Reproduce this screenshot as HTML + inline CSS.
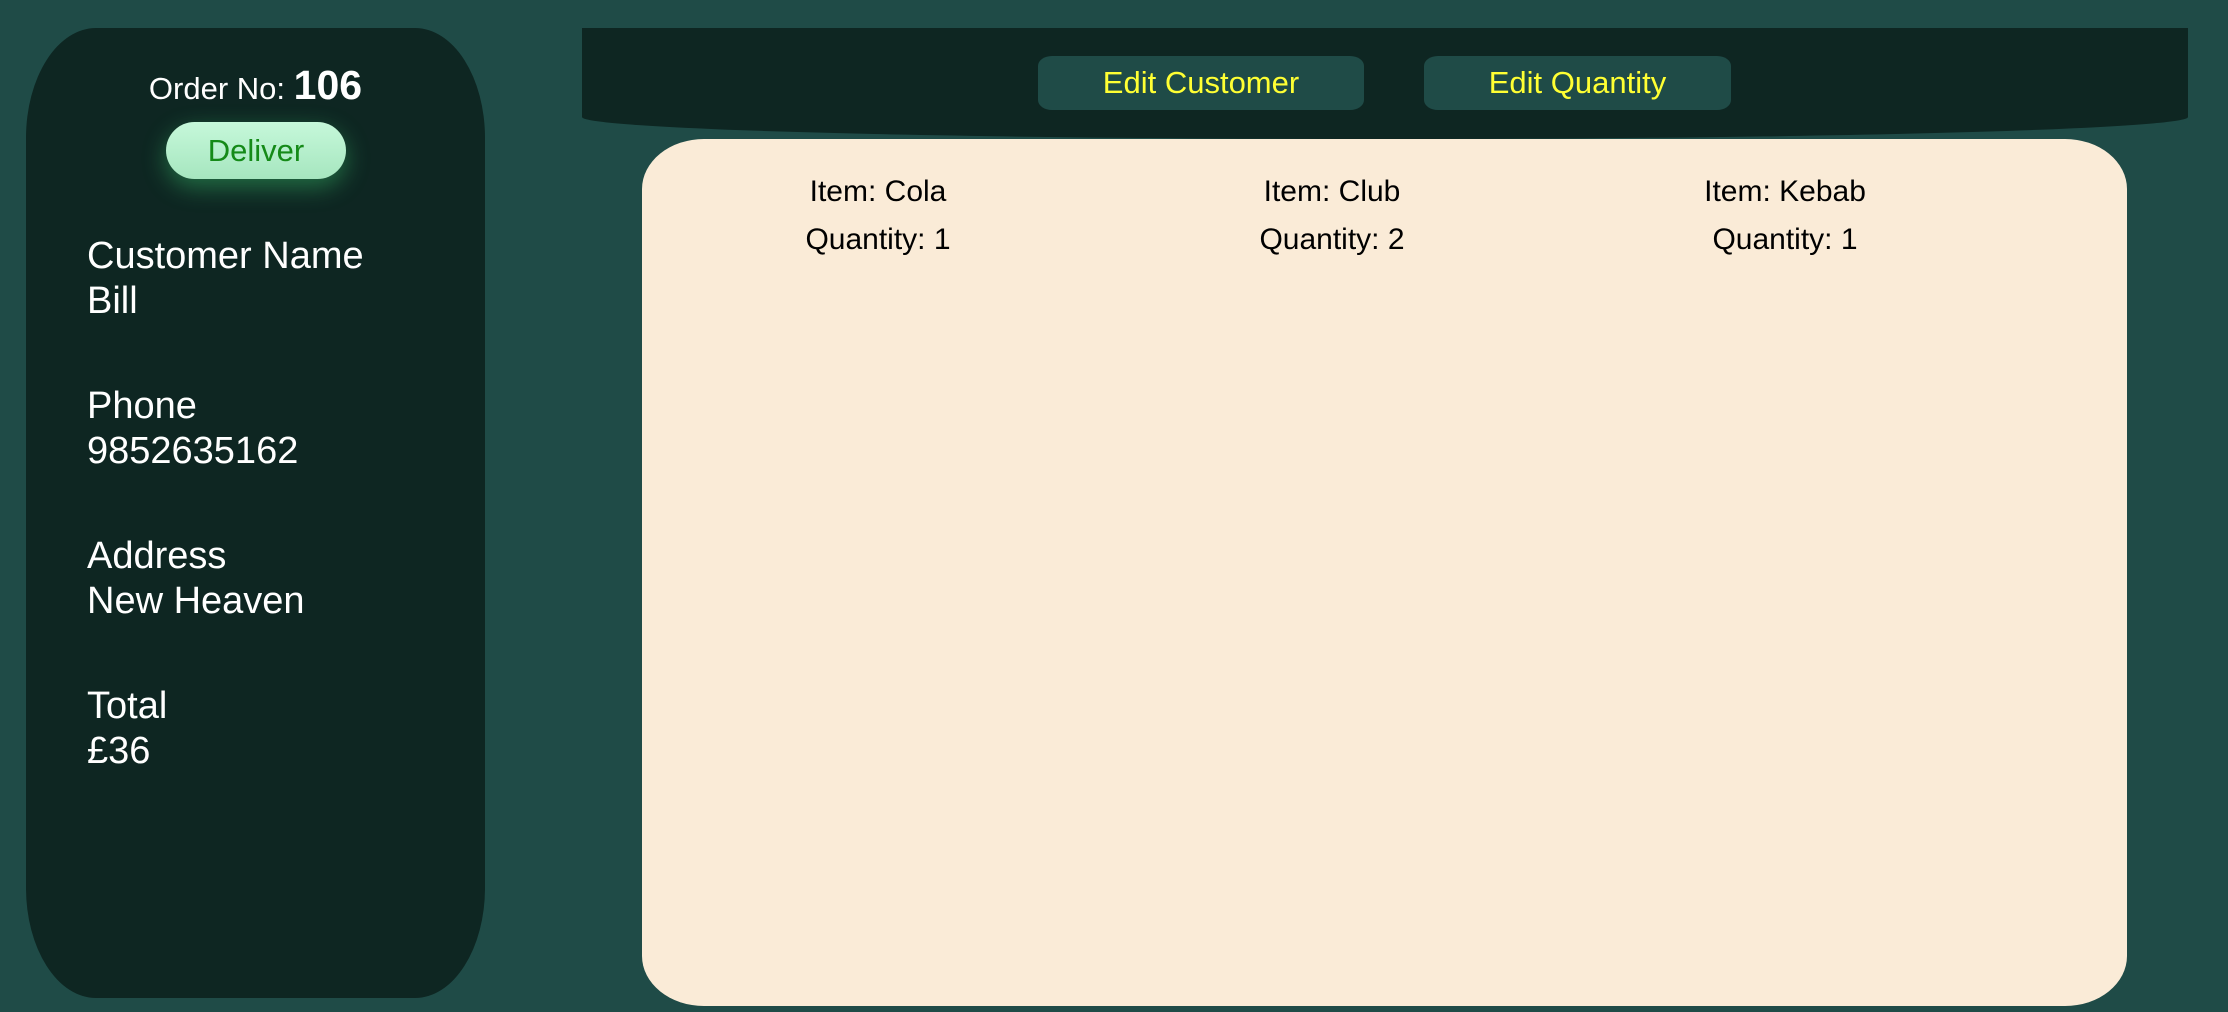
<!DOCTYPE html>
<html><head><meta charset="utf-8"><style>
*{margin:0;padding:0;box-sizing:border-box}
body{width:2228px;height:1012px;background:#1f4b47;position:relative;overflow:hidden;font-family:"Liberation Sans",Arial,sans-serif}
.left{position:absolute;left:26px;top:28px;width:459px;height:970px;background:#0e2622;border-radius:70px/110px}
.order{position:absolute;left:0;width:100%;top:34px;text-align:center;color:#fff;font-size:31px}
.order b{font-size:41px}
.deliver{position:absolute;left:140px;top:94px;width:180px;height:57px;border-radius:29px;background:linear-gradient(#c6f8da,#a6e6bf);color:#158a18;font-size:31px;text-align:center;line-height:57px;box-shadow:0 8px 24px rgba(60,200,110,0.45)}
.lbl{position:absolute;left:61px;color:#fff;font-size:38px;line-height:45px}
.hdr{position:absolute;left:582px;top:28px;width:1606px;height:111px;background:#0e2622;border-radius:0 0 800px 800px/0 0 22px 22px}
.btn{position:absolute;top:28px;height:54px;background:#1f4b47;border-radius:14px/10px;color:#ffff33;font-size:31px;text-align:center;line-height:54px}
.cream{position:absolute;left:642px;top:139px;width:1485px;height:867px;background:#faebd7;border-radius:62px/50px}
.it{position:absolute;width:300px;text-align:center;font-size:30px;color:#000;line-height:48px}
</style></head><body>
<div class="left">
<div class="order">Order No: <b>106</b></div>
<div class="deliver">Deliver</div>
<div class="lbl" style="top:206px">Customer Name<br>Bill</div>
<div class="lbl" style="top:356px">Phone<br>9852635162</div>
<div class="lbl" style="top:506px">Address<br>New Heaven</div>
<div class="lbl" style="top:656px">Total<br>£36</div>
</div>
<div class="hdr">
<div class="btn" style="left:456px;width:326px">Edit Customer</div>
<div class="btn" style="left:842px;width:307px">Edit Quantity</div>
</div>
<div class="cream">
<div class="it" style="left:86px;top:29px">Item: Cola<br>Quantity: 1</div>
<div class="it" style="left:540px;top:29px">Item: Club<br>Quantity: 2</div>
<div class="it" style="left:993px;top:29px">Item: Kebab<br>Quantity: 1</div>
</div>
</body></html>
